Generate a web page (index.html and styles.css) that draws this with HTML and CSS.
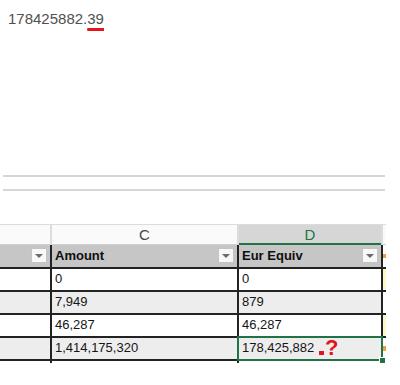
FILE: index.html
```html
<!DOCTYPE html>
<html lang="en">
<head>
    <meta charset="UTF-8" />
    <meta name="viewport" content="width=device-width, initial-scale=1.0" />
    <title>Eur Equiv rounding</title>
    <link rel="stylesheet" href="styles.css">
</head>
<body>
    <!-- exact value -->
    <div class="raw-value">178425882.<span class="mark">39</span></div>

    <div class="rules"></div>

    <div class="sheet">
        <!-- column letters -->
        <div class="col-heads">
            <div class="col-head"></div>
            <div class="col-head">C</div>
            <div class="col-head selected">D</div>
            <div class="col-head"></div>
        </div>

        <!-- table body -->
        <div class="grid">
            <div class="cell head"><span class="filter"></span></div>
            <div class="cell head">Amount<span class="filter"></span></div>
            <div class="cell head">Eur Equiv<span class="filter"></span></div>
            <div class="cell edge orange"></div>

            <div class="cell"></div>
            <div class="cell">0</div>
            <div class="cell">0</div>
            <div class="cell edge yellow"></div>

            <div class="cell band"></div>
            <div class="cell band">7,949</div>
            <div class="cell band">879</div>
            <div class="cell edge"></div>

            <div class="cell"></div>
            <div class="cell">46,287</div>
            <div class="cell">46,287</div>
            <div class="cell edge yellow"></div>

            <div class="cell band"></div>
            <div class="cell band">1,414,175,320</div>
            <div class="cell band active">
                178,425,882
                <span class="note-dot"></span>
                <span class="note">?</span>
                <span class="handle"></span>
            </div>
            <div class="cell edge orange"></div>

            <div class="cell tail"></div>
            <div class="cell tail"></div>
            <div class="cell tail"></div>
            <div class="cell tail"></div>
        </div>
    </div>
</body>
</html>
```

FILE: styles.css
```css
*, *::before, *::after {
    box-sizing: border-box;
    margin: 0;
    padding: 0;
}

body {
    width: 400px;
    background: #FFFFFF;
    font-family: 'Liberation Sans', Arial, sans-serif;
    color: #151515;
}

/* 上方數值 */
.raw-value {
    padding: 10px 0 0 8px;
    font-size: 15px;
    line-height: 17px;
    color: #505050;
}

    .raw-value .mark {
        text-decoration: underline;
        text-decoration-color: #E3141A;
        text-decoration-thickness: 3px;
        text-underline-offset: 4px;
    }

/* 兩條灰線 */
.rules {
    margin: 148px 15px 0 3px;
    height: 16px;
    border-top: 2px solid #D6D6D6;
    border-bottom: 2px solid #D6D6D6;
}

/* 試算表 */
.sheet {
    margin-top: 33px;
    width: 386px;
}

.col-heads,
.grid {
    display: grid;
    grid-template-columns: 50px 185px 142px 3px;
    gap: 2px;
}

.col-heads {
    border-top: 1px solid #DCDCDC;
    background: #DCDCDC;
    row-gap: 0;
}

.col-head {
    height: 20px;
    background: #FAFAFA;
    border-bottom: 1px solid #D0D0D0;
    font-size: 15px;
    line-height: 19px;
    text-align: center;
    color: #444444;
}

    .col-head.selected {
        background: #D6D6D6;
        color: #217346;
        border-bottom: 2px solid #217346;
    }

.grid {
    grid-template-rows: 22px repeat(4, 21px) 2px;
    background: #222222;
}

.cell {
    position: relative;
    background: #FFFFFF;
    padding-left: 3px;
    font-size: 13px;
    line-height: 19px;
    white-space: nowrap;
}

    .cell.head {
        background: #C6C6C6;
        font-weight: 700;
        line-height: 22px;
        color: #0E0E0E;
    }

    .cell.band {
        background: #EDEDED;
    }

    .cell.edge {
        padding: 0;
        background: #FFFFFF;
    }

    .cell.orange {
        background: linear-gradient(#FFFFFF 40%, #E8A040 40%, #E8A040 60%, #FFFFFF 60%);
    }

    .cell.yellow {
        background: #FFF6C8;
    }

    .cell.tail {
        background: #FFFFFF;
    }

/* 篩選按鈕 */
.filter {
    position: absolute;
    right: 3px;
    top: 3px;
    width: 16px;
    height: 15px;
    background: #F8F8F8;
    border: 1px solid #C4C4C4;
    display: flex;
    align-items: center;
    justify-content: center;
}

    .filter::after {
        content: "";
        border-top: 4px solid #6B6B6B;
        border-left: 4px solid transparent;
        border-right: 4px solid transparent;
    }

/* 選取中的儲存格 */
.cell.active {
    outline: 2px solid #217346;
    z-index: 1;
}

.handle {
    position: absolute;
    right: -5px;
    bottom: -5px;
    width: 7px;
    height: 7px;
    background: #217346;
    border: 1px solid #FFFFFF;
}

/* 紅色註記 */
.note-dot {
    position: absolute;
    left: 80px;
    top: 13px;
    width: 5px;
    height: 4px;
    background: #E3141A;
}

.note {
    position: absolute;
    left: 86px;
    top: -1px;
    font-size: 22px;
    line-height: 22px;
    font-weight: 700;
    color: #E3141A;
}
```
